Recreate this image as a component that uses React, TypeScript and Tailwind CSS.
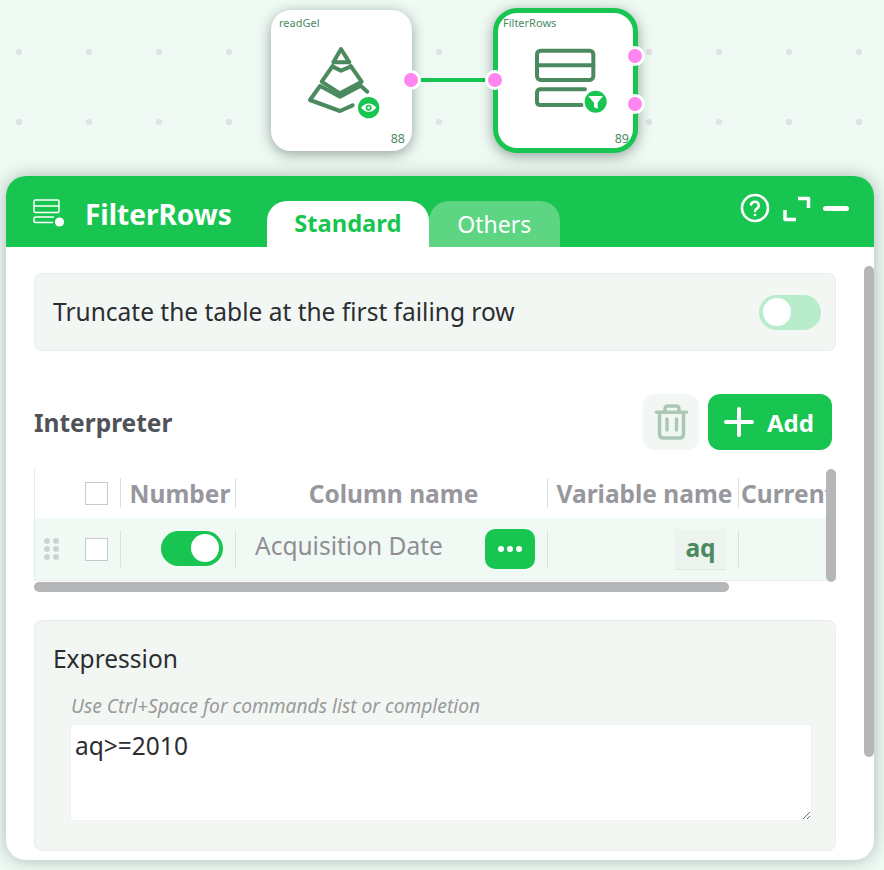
const green = '#19c551'

function Port({ className }: { className: string }) {
  return (
    <span className={`absolute w-[20px] h-[20px] rounded-full bg-[#ff85f0] border-[3px] border-white ${className}`} />
  )
}

function PyramidIcon() {
  return (
    <svg viewBox="0 0 300 300" className="absolute left-[290px] top-[30px] w-[100px] h-[100px]" fill="none" stroke="#4b8a5f" strokeWidth="12" strokeLinejoin="round" strokeLinecap="round">
      <path d="M153 57 L130 97 L178 97 Z" />
      <path d="M128 108 L95 155 L150 190 L215 155 L182 108" />
      <path d="M128 110 L153 122 L182 110" />
      <path d="M90 168 L60 210 L150 243 L188 226" />
      <path d="M95 170 L150 200 L212 167 L232 185" />
      <circle cx="236" cy="233" r="32" fill={green} stroke="none" />
      <path d="M213 233 Q236 208 259 233 Q236 258 213 233 Z" fill="#fff" stroke="none" />
      <circle cx="236" cy="233" r="9" fill={green} stroke="none" />
      <circle cx="236" cy="233" r="4" fill="#fff" stroke="none" />
    </svg>
  )
}

function FilterTableIcon() {
  return (
    <svg viewBox="0 0 300 300" className="absolute left-[520px] top-[30px] w-[100px] h-[100px]" fill="none" stroke="#4b8a5f" strokeWidth="12" strokeLinejoin="round" strokeLinecap="round">
      <rect x="51" y="62" width="169" height="88" rx="11" />
      <path d="M51 106 H220" />
      <path d="M195 178 H62 Q51 178 51 189 V215 Q51 225 62 225 H185" />
      <circle cx="227" cy="215" r="38" fill="#fff" stroke="none" />
      <circle cx="227" cy="215" r="33" fill={green} stroke="none" />
      <path d="M205 198 H249 L233 218 V237 L222 231 V218 Z" fill="#fff" stroke="none" />
    </svg>
  )
}

function Toggle({ on }: { on?: boolean }) {
  return (
    <span className={`flex items-center w-[62px] h-[35px] rounded-full px-[4px] ${on ? 'bg-[#19c551] justify-end' : 'bg-[#b9ecca] justify-start'}`}>
      <span className="w-[28px] h-[28px] rounded-full bg-white" />
    </span>
  )
}

function Checkbox() {
  return <span className="block w-[23px] h-[23px] bg-white border border-[#c9c9c9]" />
}

function Sep({ tall }: { tall?: boolean }) {
  return <span className={`absolute right-0 top-1/2 -translate-y-1/2 w-px bg-[#d8e2dc] ${tall ? 'h-[37px]' : 'h-[30px]'}`} />
}

export default function App() {
  return (
    <div className="relative w-[884px] h-[870px] overflow-hidden bg-[#f0faf5] bg-[radial-gradient(circle,#dde4e1_3px,transparent_3.5px)] bg-[length:70px_70px] bg-[position:-16px_17px] font-['Noto_Sans',sans-serif]">
      {/* canvas */}
      <div className="absolute left-[411px] top-[78px] w-[84px] h-[4px] bg-[#19c551]" />
      <div className="absolute left-[271px] top-[10px] w-[141px] h-[141px] rounded-[20px] bg-white shadow-[0_3px_14px_rgba(0,30,15,0.4)]">
        <span className="absolute left-[8px] top-[5px] text-[11px] leading-[15px] text-[#4b8a5f]">readGel</span>
        <span className="absolute right-[7px] bottom-[4px] text-[12.5px] leading-[16px] text-[#4b8a5f]">88</span>
      </div>
      <div className="absolute left-[493px] top-[8px] w-[145px] h-[145px] rounded-[24px] bg-white border-[5px] border-[#19c551] shadow-[0_3px_14px_rgba(0,30,15,0.4)]">
        <span className="absolute left-[5px] top-[2px] text-[11px] leading-[15px] text-[#4b8a5f]">FilterRows</span>
        <span className="absolute right-[4px] bottom-[1px] text-[12.5px] leading-[16px] text-[#4b8a5f]">89</span>
      </div>
      <PyramidIcon />
      <FilterTableIcon />
      <Port className="left-[401px] top-[70px]" />
      <Port className="left-[485px] top-[70px]" />
      <Port className="left-[625px] top-[46px]" />
      <Port className="left-[625px] top-[94px]" />

      {/* panel */}
      <div className="absolute left-[6px] top-[176px] w-[868px] h-[684px] rounded-[20px] bg-white overflow-hidden flex flex-col shadow-[0_0_18px_rgba(0,40,20,0.3)]">
        <div className="flex items-end h-[71px] shrink-0 bg-[#19c551] pl-[27px]">
          <svg viewBox="0 0 32 28" className="w-[32px] h-[28px] self-center mb-[-2px]" fill="none" stroke="#fff" strokeWidth="1.5">
            <rect x="1" y="1" width="25" height="12.5" rx="1.5" />
            <path d="M1 7 H26" />
            <path d="M21 18 H2.5 Q1 18 1 19.5 V22 Q1 23.5 2.5 23.5 H20" />
            <circle cx="26.5" cy="23" r="4.6" fill="#fff" stroke="none" />
          </svg>
          <span className="self-center ml-[20px] mt-[4px] text-[28px] leading-[36px] font-bold text-white">FilterRows</span>
          <div className="ml-[35px] flex">
            <span className="flex items-center justify-center w-[162px] h-[46px] rounded-t-[20px] bg-white text-[23.7px] font-bold text-[#19c551]">Standard</span>
            <span className="flex items-center justify-center w-[131px] h-[46px] rounded-t-[20px] bg-[#5dd583] text-[23px] text-white">Others</span>
          </div>
          <div className="relative ml-auto w-[140px] h-full text-white">
            <svg viewBox="0 0 32 32" className="absolute left-[5px] top-[16px] w-[32px] h-[32px]" fill="none" stroke="#fff" strokeWidth="2.6" strokeLinecap="round" strokeLinejoin="round">
              <circle cx="16" cy="16" r="13" />
              <path d="M12 12.5 a4 4 0 0 1 7.8 1.2 c0 2.6 -3.8 3.4 -3.8 5.3" />
              <path d="M16 23 h.01" />
            </svg>
            <svg viewBox="0 0 28 26" className="absolute left-[49px] top-[20px] w-[28px] h-[26px]" fill="none" stroke="#fff" strokeWidth="3.5" strokeLinejoin="round">
              <path d="M15 2.5 H25.5 V12" />
              <path d="M2 14 V23.5 H13" />
            </svg>
            <span className="absolute left-[89px] top-[30px] w-[26px] h-[5px] rounded-full bg-white" />
          </div>
        </div>

        <div className="relative flex-1 pl-[28px] pt-[26px]">
          <div className="flex items-center justify-between w-[802px] h-[78px] rounded-[8px] bg-[#f3f7f4] border border-[#e9eeeb] pl-[18px] pr-[14px]">
            <span className="text-[24.5px] leading-[32px] text-[#2b2d31]">Truncate the table at the first failing row</span>
            <Toggle />
          </div>

          <div className="flex items-center w-[798px] h-[56px] mt-[43px]">
            <span className="pt-[2px] text-[24.5px] font-bold text-[#4f5359]">Interpreter</span>
            <button className="ml-auto flex items-center justify-center w-[56px] h-[56px] rounded-[12px] bg-[#f3f7f4]">
              <svg viewBox="0 0 56 56" className="w-[56px] h-[56px]" fill="none" stroke="#a9c9b5" strokeWidth="3.5" strokeLinecap="round" strokeLinejoin="round">
                <path d="M13.5 18.3 H43.5" />
                <path d="M22 18 V15 Q22 12 25 12 H33 Q36 12 36 15 V18" />
                <path d="M16.5 19 V40 Q16.5 44 20.5 44 H36.5 Q40.5 44 40.5 40 V19" />
                <path d="M24 25 V36 M33.5 25 V36" />
              </svg>
            </button>
            <button className="ml-[9px] flex items-center w-[124px] h-[56px] rounded-[12px] bg-[#19c551] pl-[16px] text-[24px] font-bold text-white">
              <svg viewBox="0 0 30 30" className="w-[30px] h-[30px] mr-[13px]" fill="none" stroke="#fff" strokeWidth="4" strokeLinecap="round">
                <path d="M15 2 V28 M2 15 H28" />
              </svg>
              <span className="pt-[2px]">Add</span>
            </button>
          </div>

          {/* table */}
          <div className="mt-[18px] w-[792px] h-[113px] overflow-hidden border-l border-[#e6eee9] whitespace-nowrap text-[24.5px]">
            <div className="flex items-center h-[50px] font-bold text-[#97979e] w-[900px]">
              <div className="relative flex items-center h-full w-[86px] pl-[50px]"><Checkbox /><Sep /></div>
              <div className="relative flex items-center justify-center h-full w-[115px] pl-[3px] pt-[2px]">Number<Sep /></div>
              <div className="relative flex items-center justify-center h-full w-[312px] pl-[3px] pt-[2px]">Column name<Sep /></div>
              <div className="relative flex items-center justify-center h-full w-[191px] pl-[2px] pt-[2px]">Variable name<Sep /></div>
              <div className="pl-[2px] pt-[2px]">Current value</div>
            </div>
            <div className="flex items-center h-[63px] w-[900px] bg-[#f1f9f5] border-b border-[#e6eee9]">
              <div className="relative flex items-center h-full w-[86px] pl-[9px]">
                <span className="grid grid-cols-2 gap-x-[3px] gap-y-[2px] w-[15px] mr-[26px]">
                  {[0, 1, 2, 3, 4, 5].map((i) => (
                    <span key={i} className="w-[6px] h-[6px] rounded-full bg-[#cfd3d1]" />
                  ))}
                </span>
                <Checkbox />
                <Sep tall />
              </div>
              <div className="relative flex items-center justify-end h-full w-[115px] pr-[13px] pb-[2px]"><Toggle on /><Sep tall /></div>
              <div className="relative flex items-center justify-between h-full w-[312px] pl-[19px] pr-[13px] text-[#8f8f93]">
                <span className="pb-[6px]">Acquisition Date</span>
                <span className="flex items-center justify-center gap-[3px] w-[50px] h-[40px] rounded-[10px] bg-[#19c551]">
                  <span className="w-[6px] h-[6px] rounded-full bg-white" />
                  <span className="w-[6px] h-[6px] rounded-full bg-white" />
                  <span className="w-[6px] h-[6px] rounded-full bg-white" />
                </span>
                <Sep tall />
              </div>
              <div className="relative flex items-center justify-end h-full w-[191px] pr-[13px]">
                <span className="flex items-center justify-center w-[51px] h-[41px] bg-[#edf3ef] border-b border-[#dfe8e3] font-bold text-[#4b8a5f]">aq</span>
                <Sep tall />
              </div>
            </div>
          </div>
          <div className="mt-[1px] w-[695px] h-[10px] rounded-full bg-[#b5b6b8]" />
          <div className="absolute left-[820px] top-[222px] w-[10px] h-[113px] rounded-full bg-[#b5b6b8]" />

          {/* expression */}
          <div className="mt-[28px] w-[802px] h-[231px] rounded-[8px] bg-[#f3f7f4] border border-[#e9eeeb] pl-[18px] pt-[21px]">
            <div className="text-[24.5px] leading-[33px] text-[#2b2d31]">Expression</div>
            <div className="mt-[18px] ml-[18px] text-[19.2px] leading-[26px] italic text-[#9a9a9a]">Use Ctrl+Space for commands list or completion</div>
            <textarea
              defaultValue="aq>=2010"
              className="block mt-[5px] ml-[17px] w-[742px] h-[97px] bg-white pl-[4px] pr-[5px] pt-[4px] text-[24.5px] leading-[33px] text-[#2b2d31] outline-none border border-[#f0f2f1]"
            />
          </div>

          <div className="absolute left-[858px] top-[19px] w-[10px] h-[491px] rounded-full bg-[#b5b6b8]" />
        </div>
      </div>
    </div>
  )
}
